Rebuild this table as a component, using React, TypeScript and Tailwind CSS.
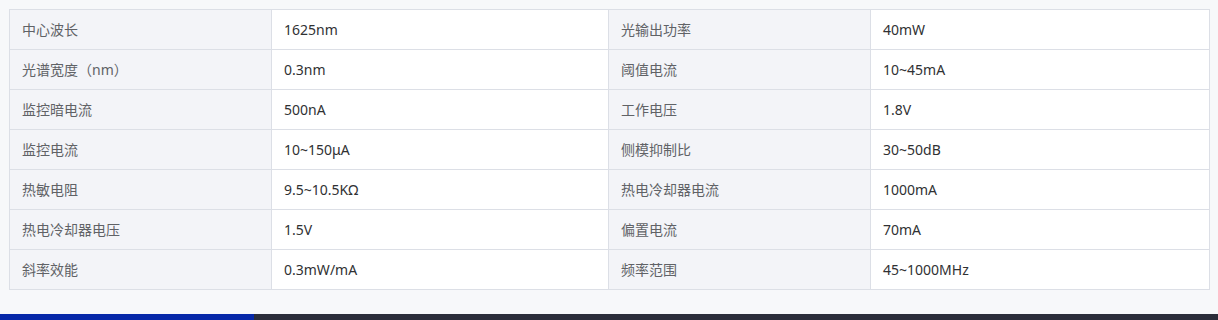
import React from 'react';

const rows: [string, string, string, string][] = [
  ['中心波长', '1625nm', '光输出功率', '40mW'],
  ['光谱宽度（nm）', '0.3nm', '阈值电流', '10~45mA'],
  ['监控暗电流', '500nA', '工作电压', '1.8V'],
  ['监控电流', '10~150μA', '侧模抑制比', '30~50dB'],
  ['热敏电阻', '9.5~10.5KΩ', '热电冷却器电流', '1000mA'],
  ['热电冷却器电压', '1.5V', '偏置电流', '70mA'],
  ['斜率效能', '0.3mW/mA', '频率范围', '45~1000MHz'],
];

const labelCls = 'h-10 border border-[#dcdfe6] bg-[#f3f4f8] px-3 text-left font-normal text-[#606266]';
const valueCls = 'h-10 border border-[#dcdfe6] bg-white px-3 text-left text-[#303133]';

export default function App() {
  return (
    <div className="w-[1218px] h-[320px] overflow-hidden bg-[#f7f8fa] flex flex-col font-['Noto_Sans','Noto_Sans_CJK_SC',sans-serif] text-[14px]">
      <div className="px-[9px] pt-[9px]">
        <table className="w-[1200px] table-fixed border-collapse">
          <colgroup>
            <col className="w-[262px]" />
            <col className="w-[337px]" />
            <col className="w-[262px]" />
            <col className="w-[339px]" />
          </colgroup>
          <tbody>
            {rows.map((r) => (
              <tr key={r[0]}>
                <td className={labelCls}>{r[0]}</td>
                <td className={valueCls}>{r[1]}</td>
                <td className={labelCls}>{r[2]}</td>
                <td className={valueCls}>{r[3]}</td>
              </tr>
            ))}
          </tbody>
        </table>
      </div>
      <div className="mt-auto flex h-[6px]">
        <div className="w-[254px] bg-[#0628a8]" />
        <div className="flex-1 bg-[#2b2d3a]" />
      </div>
    </div>
  );
}
